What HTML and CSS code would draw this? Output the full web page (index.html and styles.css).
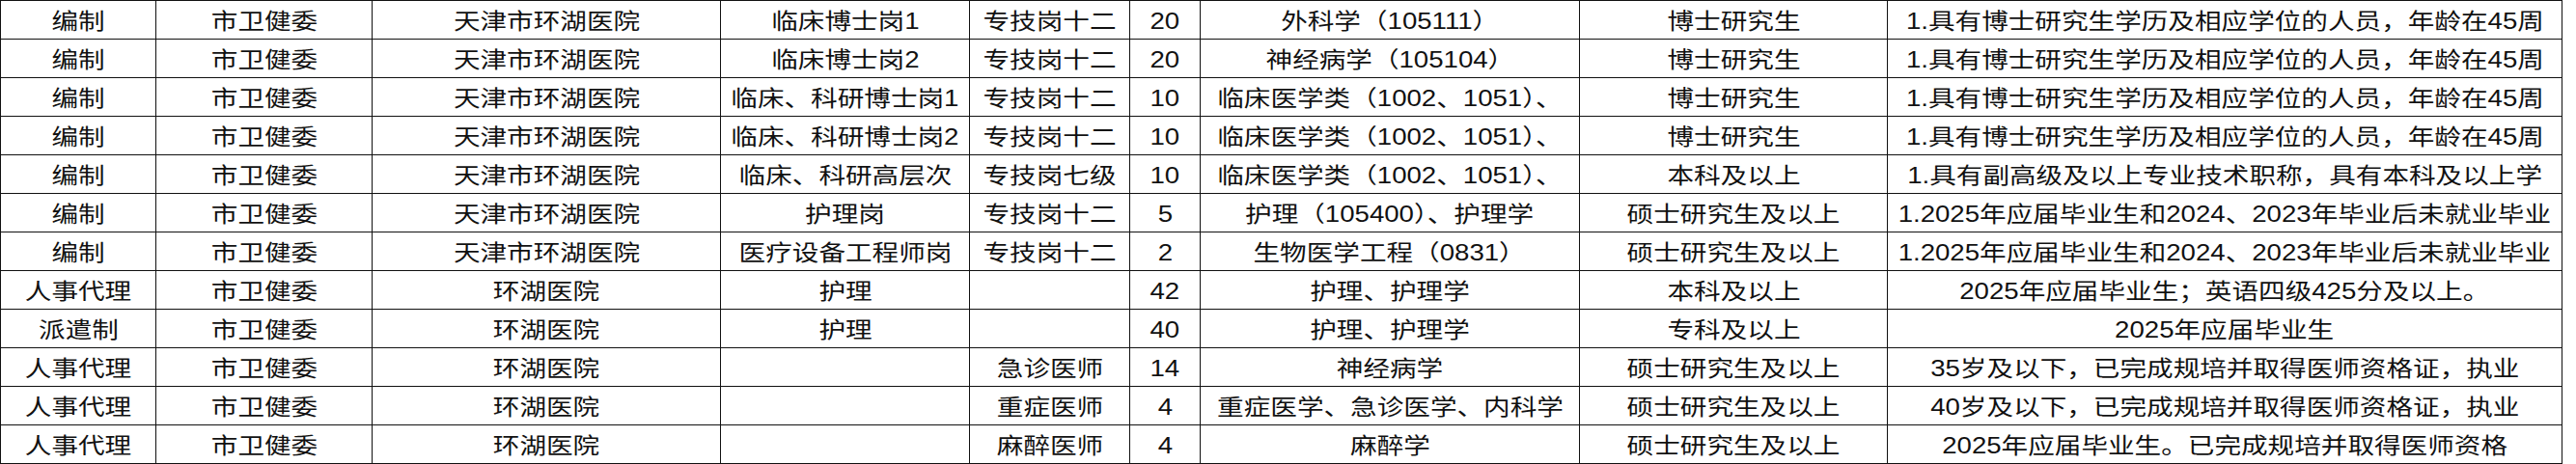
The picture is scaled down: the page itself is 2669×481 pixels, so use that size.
FILE: index.html
```html
<!DOCTYPE html>
<html lang="zh-CN">
<head>
<meta charset="utf-8">
<title>招聘岗位表</title>
<link rel="stylesheet" href="styles.css">
</head>
<body>
<div class="sheet">
  <div class="c"><span class="t">编制</span></div><div class="c"><span class="t">市卫健委</span></div><div class="c"><span class="t">天津市环湖医院</span></div><div class="c"><span class="t">临床博士岗1</span></div><div class="c"><span class="t">专技岗十二</span></div><div class="c"><span class="t">20</span></div><div class="c"><span class="t">外科学（105111）</span></div><div class="c"><span class="t">博士研究生</span></div><div class="c"><span class="t">1.具有博士研究生学历及相应学位的人员，年龄在45周</span></div>

  <div class="c"><span class="t">编制</span></div><div class="c"><span class="t">市卫健委</span></div><div class="c"><span class="t">天津市环湖医院</span></div><div class="c"><span class="t">临床博士岗2</span></div><div class="c"><span class="t">专技岗十二</span></div><div class="c"><span class="t">20</span></div><div class="c"><span class="t">神经病学（105104）</span></div><div class="c"><span class="t">博士研究生</span></div><div class="c"><span class="t">1.具有博士研究生学历及相应学位的人员，年龄在45周</span></div>

  <div class="c"><span class="t">编制</span></div><div class="c"><span class="t">市卫健委</span></div><div class="c"><span class="t">天津市环湖医院</span></div><div class="c"><span class="t">临床、科研博士岗1</span></div><div class="c"><span class="t">专技岗十二</span></div><div class="c"><span class="t">10</span></div><div class="c"><span class="t">临床医学类（1002、1051）、</span></div><div class="c"><span class="t">博士研究生</span></div><div class="c"><span class="t">1.具有博士研究生学历及相应学位的人员，年龄在45周</span></div>

  <div class="c"><span class="t">编制</span></div><div class="c"><span class="t">市卫健委</span></div><div class="c"><span class="t">天津市环湖医院</span></div><div class="c"><span class="t">临床、科研博士岗2</span></div><div class="c"><span class="t">专技岗十二</span></div><div class="c"><span class="t">10</span></div><div class="c"><span class="t">临床医学类（1002、1051）、</span></div><div class="c"><span class="t">博士研究生</span></div><div class="c"><span class="t">1.具有博士研究生学历及相应学位的人员，年龄在45周</span></div>

  <div class="c"><span class="t">编制</span></div><div class="c"><span class="t">市卫健委</span></div><div class="c"><span class="t">天津市环湖医院</span></div><div class="c"><span class="t">临床、科研高层次</span></div><div class="c"><span class="t">专技岗七级</span></div><div class="c"><span class="t">10</span></div><div class="c"><span class="t">临床医学类（1002、1051）、</span></div><div class="c"><span class="t">本科及以上</span></div><div class="c"><span class="t">1.具有副高级及以上专业技术职称，具有本科及以上学</span></div>

  <div class="c"><span class="t">编制</span></div><div class="c"><span class="t">市卫健委</span></div><div class="c"><span class="t">天津市环湖医院</span></div><div class="c"><span class="t">护理岗</span></div><div class="c"><span class="t">专技岗十二</span></div><div class="c"><span class="t">5</span></div><div class="c"><span class="t">护理（105400）、护理学</span></div><div class="c"><span class="t">硕士研究生及以上</span></div><div class="c"><span class="t">1.2025年应届毕业生和2024、2023年毕业后未就业毕业</span></div>

  <div class="c"><span class="t">编制</span></div><div class="c"><span class="t">市卫健委</span></div><div class="c"><span class="t">天津市环湖医院</span></div><div class="c"><span class="t">医疗设备工程师岗</span></div><div class="c"><span class="t">专技岗十二</span></div><div class="c"><span class="t">2</span></div><div class="c"><span class="t">生物医学工程（0831）</span></div><div class="c"><span class="t">硕士研究生及以上</span></div><div class="c"><span class="t">1.2025年应届毕业生和2024、2023年毕业后未就业毕业</span></div>

  <div class="c"><span class="t">人事代理</span></div><div class="c"><span class="t">市卫健委</span></div><div class="c"><span class="t">环湖医院</span></div><div class="c"><span class="t">护理</span></div><div class="c"></div><div class="c"><span class="t">42</span></div><div class="c"><span class="t">护理、护理学</span></div><div class="c"><span class="t">本科及以上</span></div><div class="c"><span class="t">2025年应届毕业生；英语四级425分及以上。</span></div>

  <div class="c"><span class="t">派遣制</span></div><div class="c"><span class="t">市卫健委</span></div><div class="c"><span class="t">环湖医院</span></div><div class="c"><span class="t">护理</span></div><div class="c"></div><div class="c"><span class="t">40</span></div><div class="c"><span class="t">护理、护理学</span></div><div class="c"><span class="t">专科及以上</span></div><div class="c"><span class="t">2025年应届毕业生</span></div>

  <div class="c"><span class="t">人事代理</span></div><div class="c"><span class="t">市卫健委</span></div><div class="c"><span class="t">环湖医院</span></div><div class="c"></div><div class="c"><span class="t">急诊医师</span></div><div class="c"><span class="t">14</span></div><div class="c"><span class="t">神经病学</span></div><div class="c"><span class="t">硕士研究生及以上</span></div><div class="c"><span class="t">35岁及以下，已完成规培并取得医师资格证，执业</span></div>

  <div class="c"><span class="t">人事代理</span></div><div class="c"><span class="t">市卫健委</span></div><div class="c"><span class="t">环湖医院</span></div><div class="c"></div><div class="c"><span class="t">重症医师</span></div><div class="c"><span class="t">4</span></div><div class="c"><span class="t">重症医学、急诊医学、内科学</span></div><div class="c"><span class="t">硕士研究生及以上</span></div><div class="c"><span class="t">40岁及以下，已完成规培并取得医师资格证，执业</span></div>

  <div class="c"><span class="t">人事代理</span></div><div class="c"><span class="t">市卫健委</span></div><div class="c"><span class="t">环湖医院</span></div><div class="c"></div><div class="c"><span class="t">麻醉医师</span></div><div class="c"><span class="t">4</span></div><div class="c"><span class="t">麻醉学</span></div><div class="c"><span class="t">硕士研究生及以上</span></div><div class="c"><span class="t">2025年应届毕业生。已完成规培并取得医师资格</span></div>
</div>
</body>
</html>
```

FILE: styles.css
```css
html, body {
  margin: 0;
  padding: 0;
  background: #ffffff;
}

.sheet {
  display: grid;
  grid-template-columns: 161px 224px 361px 258px 166px 73px 393px 319px 699px;
  grid-auto-rows: 40px;
  width: max-content;
  border-top: 1px solid #111;
  border-left: 1px solid #111;
  font-family: "Liberation Sans", "Noto Sans CJK SC", sans-serif;
  font-size: 23px;
  color: #111;
}

.c {
  box-sizing: border-box;
  border-right: 1px solid #111;
  border-bottom: 1px solid #111;
  overflow: hidden;
  display: flex;
  align-items: center;
  justify-content: center;
  white-space: nowrap;
}

.t {
  display: inline-block;
  transform: scaleX(1.2);
  transform-origin: center;
  line-height: 1;
  padding-top: 3px;
}
```
